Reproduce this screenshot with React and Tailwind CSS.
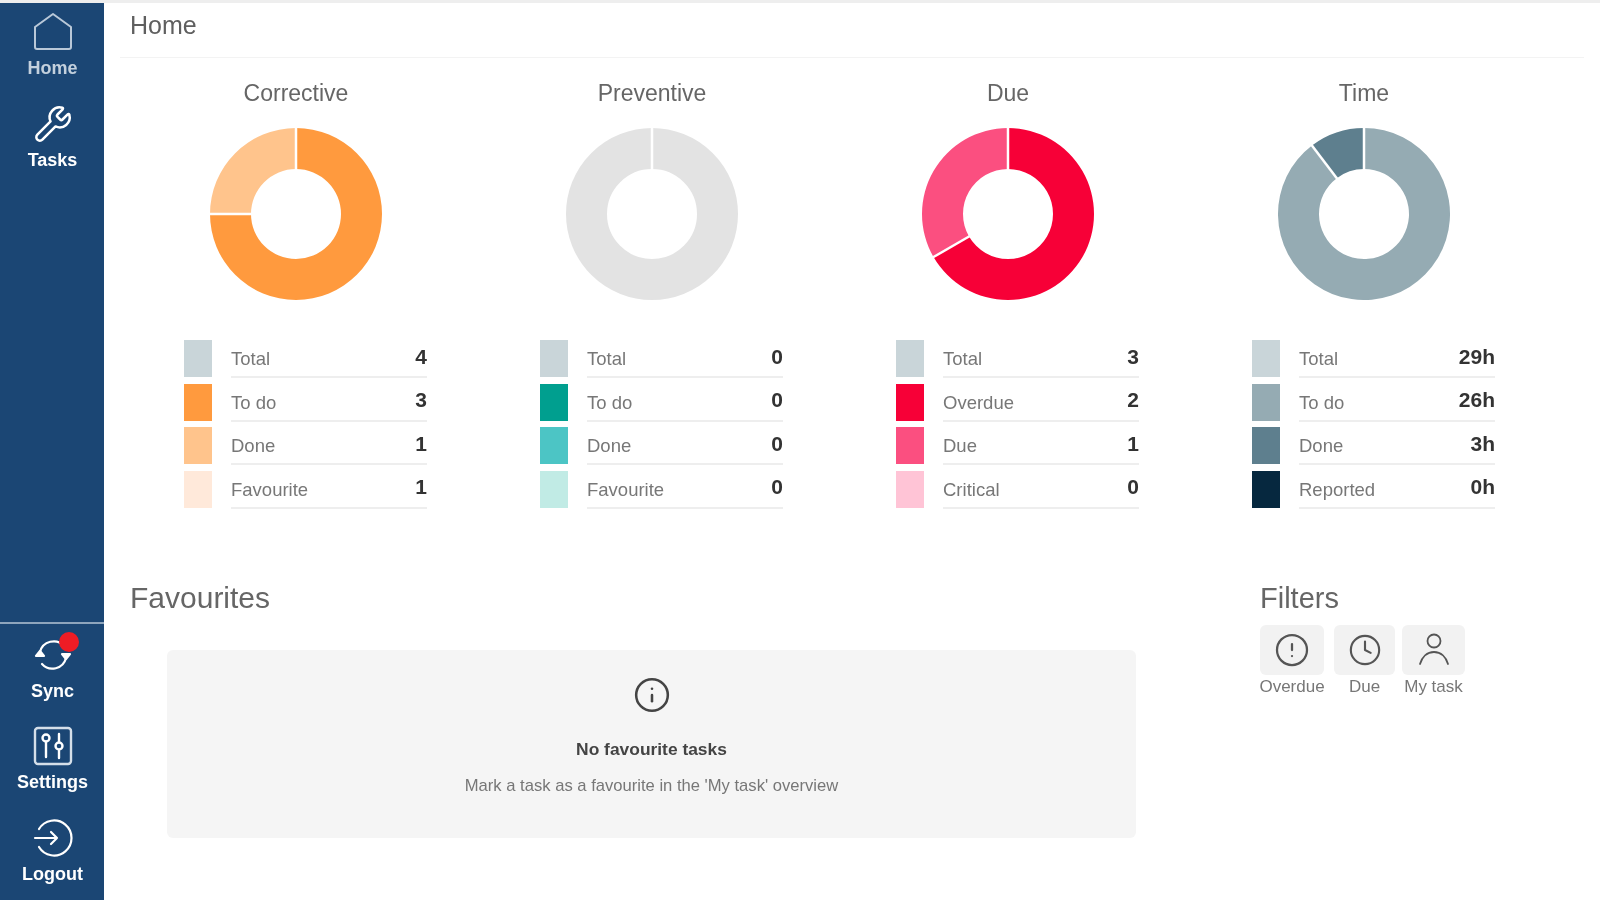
import { CircleAlert, Clock, Info, Wrench } from "lucide-react";

const charts = [
  {
    title: "Corrective",
    slices: [{ value: 3, color: "#ff9a3e" }, { value: 1, color: "#ffc48c" }],
    rows: [
      { label: "Total", value: "4", color: "#c9d5d9" },
      { label: "To do", value: "3", color: "#ff9a3e" },
      { label: "Done", value: "1", color: "#ffc48c" },
      { label: "Favourite", value: "1", color: "#ffe9da" },
    ],
  },
  {
    title: "Preventive",
    slices: [{ value: 1, color: "#e3e3e3" }],
    rows: [
      { label: "Total", value: "0", color: "#c9d5d9" },
      { label: "To do", value: "0", color: "#009f8f" },
      { label: "Done", value: "0", color: "#4cc5c5" },
      { label: "Favourite", value: "0", color: "#c1ebe5" },
    ],
  },
  {
    title: "Due",
    slices: [{ value: 2, color: "#f70037" }, { value: 1, color: "#fb4f80" }],
    rows: [
      { label: "Total", value: "3", color: "#c9d5d9" },
      { label: "Overdue", value: "2", color: "#f70037" },
      { label: "Due", value: "1", color: "#fb4f80" },
      { label: "Critical", value: "0", color: "#ffc4d6" },
    ],
  },
  {
    title: "Time",
    slices: [{ value: 26, color: "#95abb3" }, { value: 3, color: "#5e7f8e" }],
    rows: [
      { label: "Total", value: "29h", color: "#c9d5d9" },
      { label: "To do", value: "26h", color: "#95abb3" },
      { label: "Done", value: "3h", color: "#5e7f8e" },
      { label: "Reported", value: "0h", color: "#06283f" },
    ],
  },
];

function Donut({ slices }) {
  const total = slices.reduce((sum, s) => sum + s.value, 0);
  const R = 86;
  const r = 45;
  const point = (radius, a) => [86 + radius * Math.sin(a), 86 - radius * Math.cos(a)];
  let start = 0;
  const arcs = slices.map((s) => {
    const sweep = (s.value / total) * Math.PI * 2;
    const end = start + sweep;
    const arc = { color: s.color, start, end };
    start = end;
    return arc;
  });

  return (
    <svg width="172" height="172" viewBox="0 0 172 172">
      {arcs.length === 1 ? (
        <circle cx="86" cy="86" r="65.5" fill="none" stroke={arcs[0].color} strokeWidth="41" />
      ) : (
        arcs.map((a) => {
          const large = a.end - a.start > Math.PI ? 1 : 0;
          const [x1, y1] = point(R, a.start);
          const [x2, y2] = point(R, a.end);
          const [x3, y3] = point(r, a.end);
          const [x4, y4] = point(r, a.start);
          return (
            <path
              key={a.color}
              fill={a.color}
              d={`M${x1} ${y1}A${R} ${R} 0 ${large} 1 ${x2} ${y2}L${x3} ${y3}A${r} ${r} 0 ${large} 0 ${x4} ${y4}Z`}
            />
          );
        })
      )}
      {arcs.map((a) => {
        const [x1, y1] = point(r - 1, a.start);
        const [x2, y2] = point(R + 1, a.start);
        return <line key={a.color} x1={x1} y1={y1} x2={x2} y2={y2} stroke="#fff" strokeWidth="2.5" />;
      })}
    </svg>
  );
}

function HomeIcon() {
  return (
    <svg width="40" height="40" viewBox="0 0 40 40" fill="none" stroke="#b9c8d8" strokeWidth="2" strokeLinejoin="round">
      <path d="M20 2 L38 15 V35 a2 2 0 0 1 -2 2 H4 a2 2 0 0 1 -2 -2 V15 Z" />
    </svg>
  );
}

function SyncIcon() {
  return (
    <svg width="40" height="40" viewBox="0 0 40 40" fill="none" stroke="#fff" strokeWidth="2.2" strokeLinecap="round" strokeLinejoin="round">
      <path d="M7 17 A14 14 0 0 1 31 11" />
      <path d="M33 23 A14 14 0 0 1 9 29" />
      <path d="M3 21 L7 16 L11 21 Z" fill="#fff" />
      <path d="M37 19 L33 24 L29 19 Z" fill="#fff" />
    </svg>
  );
}

function SettingsIcon() {
  return (
    <svg width="40" height="40" viewBox="0 0 40 40" fill="none" stroke="#fff" strokeWidth="2.4" strokeLinecap="round">
      <rect x="2" y="2" width="36" height="36" rx="3" stroke="#d5dfe9" />
      <circle cx="13" cy="12" r="3.5" />
      <path d="M13 16 V31 M26 8 V15 M26 25 V32" />
      <circle cx="26" cy="20" r="3.5" />
    </svg>
  );
}

function LogoutIcon() {
  return (
    <svg width="40" height="40" viewBox="0 0 40 40" fill="none" stroke="#fff" strokeWidth="2.2" strokeLinecap="round" strokeLinejoin="round">
      <path d="M6 11 A17.5 17.5 0 1 1 6 29" />
      <path d="M2 20 H24 M18 14 L24 20 L18 26" />
    </svg>
  );
}

function UserIcon() {
  return (
    <svg width="38" height="38" viewBox="0 0 38 38" fill="none" stroke="currentColor" strokeWidth="1.8" strokeLinecap="round">
      <circle cx="19" cy="10" r="6.5" />
      <path d="M5 33 C7 26 12 21 19 21 S31 26 33 33" />
    </svg>
  );
}

function NavItem({ icon, label, dim, badge, className }) {
  return (
    <div className={`relative flex flex-col items-center ${className}`}>
      <div className="flex h-[38px] w-[40px] items-center justify-center">{icon}</div>
      <span className={`mt-[7px] text-[18px] leading-5 font-bold ${dim ? "text-[#c3d0dd]" : "text-white"}`}>{label}</span>
      {badge && <span className="absolute top-[-4px] left-[58px] h-5 w-5 rounded-full bg-[#ee1c25]" />}
    </div>
  );
}

function Filter({ icon, label, className }) {
  return (
    <div className={`flex flex-col items-center ${className}`}>
      <div className="flex h-[50px] w-full items-center justify-center rounded-md bg-[#f2f2f2] text-[#555]">{icon}</div>
      <span className="mt-[2px] text-[17px] leading-5 whitespace-nowrap text-[#777]">{label}</span>
    </div>
  );
}

export default function App() {
  return (
    <div className="flex h-screen overflow-hidden border-t-[3px] border-[#eeeeee] bg-white font-['Liberation_Sans',Arial,sans-serif] blur-[0.6px]">
      <aside className="flex w-[104px] shrink-0 flex-col bg-[#1b4674] pl-[1px]">
        <div className="flex-1 pt-[10px]">
          <NavItem icon={<HomeIcon />} label="Home" dim className="h-[92px]" />
          <NavItem icon={<Wrench size={42} strokeWidth={1.5} color="#fff" />} label="Tasks" className="h-[92px]" />
        </div>
        <div className="-ml-[1px] border-t-2 border-[#8ea5bd] pt-3 pl-[1px]">
          <NavItem icon={<SyncIcon />} label="Sync" badge className="h-[91px]" />
          <NavItem icon={<SettingsIcon />} label="Settings" className="h-[92px]" />
          <NavItem icon={<LogoutIcon />} label="Logout" className="h-[81px]" />
        </div>
      </aside>

      <main className="flex-1">
        <header className="ml-4 mr-4 flex h-[55px] items-center border-b border-[#f3f3f3] pb-[9px] pl-[10px] text-[25px] text-[#5f5f5f]">
          Home
        </header>

        <section className="ml-[14px] flex">
          {charts.map((chart) => (
            <div key={chart.title} className="w-[356px] pt-[21px]">
              <h2 className="text-center text-[23px] leading-7 text-[#666]">{chart.title}</h2>
              <div className="mt-[21px] flex justify-center">
                <Donut slices={chart.slices} />
              </div>
              <div className="mt-[40px] ml-[66px] w-[243px]">
                {chart.rows.map((row) => (
                  <div key={row.label} className="flex h-[43.5px] gap-[19px]">
                    <span className="h-[37px] w-[28px] shrink-0" style={{ backgroundColor: row.color }} />
                    <div className="flex h-[38px] flex-1 items-center justify-between border-b-2 border-[#eeeeee]">
                      <span className="pt-[2px] text-[18.5px] text-[#777]">{row.label}</span>
                      <span className="pb-[3px] text-[21px] font-bold text-[#333]">{row.value}</span>
                    </div>
                  </div>
                ))}
              </div>
            </div>
          ))}
        </section>

        <section className="mt-[66px] flex pl-[26px]">
          <div className="w-[1130px]">
            <h2 className="text-[30px] leading-9 text-[#666]">Favourites</h2>
            <div className="mt-[34px] ml-[37px] flex h-[188px] w-[969px] flex-col items-center rounded-md bg-[#f5f5f5] pt-[26px]">
              <Info size={38} strokeWidth={1.6} color="#444" />
              <h3 className="mt-[25px] text-[17.4px] leading-5 font-bold text-[#444]">No favourite tasks</h3>
              <p className="mt-[17px] text-[16.6px] leading-5 text-[#777]">Mark a task as a favourite in the 'My task' overview</p>
            </div>
          </div>
          <div>
            <h2 className="text-[29px] leading-9 text-[#666]">Filters</h2>
            <div className="mt-[9px] flex">
              <Filter icon={<CircleAlert size={36} strokeWidth={1.5} />} label="Overdue" className="w-[64px]" />
              <Filter icon={<Clock size={34} strokeWidth={1.5} />} label="Due" className="ml-[10px] w-[61px]" />
              <Filter icon={<UserIcon />} label="My task" className="ml-[7px] w-[63px]" />
            </div>
          </div>
        </section>
      </main>
    </div>
  );
}
